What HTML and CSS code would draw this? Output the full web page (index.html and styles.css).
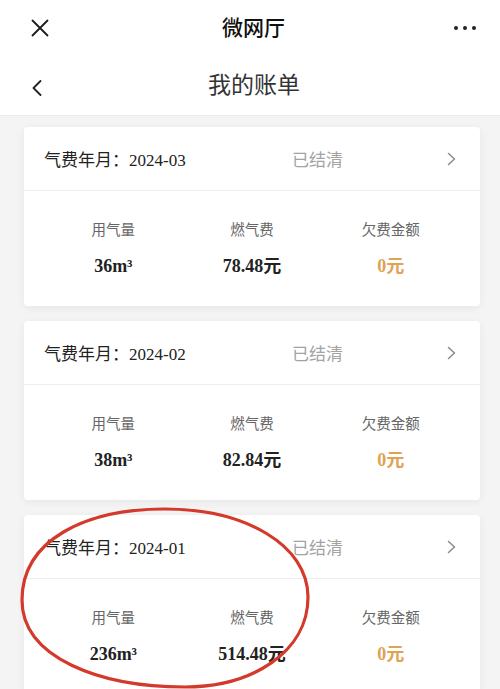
FILE: index.html
```html
<!DOCTYPE html>
<html lang="zh-CN">
<head>
<meta charset="utf-8">
<title>我的账单</title>
<link rel="stylesheet" href="styles.css">
</head>
<body>
<div class="page">
  <header class="topbar">
    <div class="tb-left">
      <svg class="icon-close" width="18" height="18" viewBox="0 0 18 18"><path d="M1.5 1.5 L16.5 16.5 M16.5 1.5 L1.5 16.5" stroke="#1c1c1c" stroke-width="1.8" stroke-linecap="round" fill="none"/></svg>
    </div>
    <div class="tb-title">微网厅</div>
    <div class="tb-right">
      <span class="dot"></span><span class="dot"></span><span class="dot"></span>
    </div>
  </header>
  <div class="navbar">
    <div class="nb-left">
      <svg width="10" height="16" viewBox="0 0 10 16"><path d="M8.5 1 L1.5 8 L8.5 15" stroke="#222" stroke-width="1.8" stroke-linecap="round" stroke-linejoin="round" fill="none"/></svg>
    </div>
    <div class="nb-title">我的账单</div>
    <div class="nb-right"></div>
  </div>

  <main class="list">
    <section class="card">
      <div class="card-head">
        <span class="month">气费年月：2024-03</span>
        <span class="status">已结清</span>
        <svg class="chev" width="9" height="14" viewBox="0 0 9 14"><path d="M1.5 1.5 L7.5 7 L1.5 12.5" stroke="#8a8a8a" stroke-width="1.5" stroke-linecap="round" stroke-linejoin="round" fill="none"/></svg>
      </div>
      <div class="card-body">
        <div class="col"><div class="label">用气量</div><div class="value">36m³</div></div>
        <div class="col"><div class="label">燃气费</div><div class="value">78.48元</div></div>
        <div class="col"><div class="label">欠费金额</div><div class="value owe">0元</div></div>
      </div>
    </section>

    <section class="card">
      <div class="card-head">
        <span class="month">气费年月：2024-02</span>
        <span class="status">已结清</span>
        <svg class="chev" width="9" height="14" viewBox="0 0 9 14"><path d="M1.5 1.5 L7.5 7 L1.5 12.5" stroke="#8a8a8a" stroke-width="1.5" stroke-linecap="round" stroke-linejoin="round" fill="none"/></svg>
      </div>
      <div class="card-body">
        <div class="col"><div class="label">用气量</div><div class="value">38m³</div></div>
        <div class="col"><div class="label">燃气费</div><div class="value">82.84元</div></div>
        <div class="col"><div class="label">欠费金额</div><div class="value owe">0元</div></div>
      </div>
    </section>

    <section class="card">
      <div class="card-head">
        <span class="month">气费年月：2024-01</span>
        <span class="status">已结清</span>
        <svg class="chev" width="9" height="14" viewBox="0 0 9 14"><path d="M1.5 1.5 L7.5 7 L1.5 12.5" stroke="#8a8a8a" stroke-width="1.5" stroke-linecap="round" stroke-linejoin="round" fill="none"/></svg>
      </div>
      <div class="card-body">
        <div class="col"><div class="label">用气量</div><div class="value">236m³</div></div>
        <div class="col"><div class="label">燃气费</div><div class="value">514.48元</div></div>
        <div class="col"><div class="label">欠费金额</div><div class="value owe">0元</div></div>
      </div>
    </section>
  </main>

  <svg class="annotation" width="500" height="689" viewBox="0 0 500 689">
    <path d="M22 600 C22 540 85 509 165 509 C245 509 308 545 308 597 C308 652 252 687 185 687 C100 687 22 658 22 600 Z" fill="none" stroke="#d33a2b" stroke-width="3.2"/>
  </svg>
</div>
</body>
</html>
```

FILE: styles.css
```css
html, body {
  margin: 0;
  padding: 0;
}
body {
  width: 500px;
  height: 689px;
  overflow: hidden;
  background: #f4f4f4;
  font-family: "Liberation Serif", "Noto Sans CJK SC", serif;
  color: #222;
}
.page {
  position: relative;
  width: 500px;
  height: 689px;
  overflow: hidden;
}
.topbar {
  height: 55px;
  background: #fff;
  display: grid;
  grid-template-columns: 1fr auto 1fr;
  align-items: center;
  padding: 0 24px 0 31px;
}
.tb-left {
  display: flex;
  align-items: center;
}
.icon-close {
  display: block;
}
.tb-title {
  font-family: "Noto Sans CJK SC", sans-serif;
  font-size: 21px;
  font-weight: 500;
  color: #111;
  line-height: 1;
  margin-top: -2px;
}
.tb-right {
  display: flex;
  justify-content: flex-end;
  gap: 5px;
}
.dot {
  width: 4px;
  height: 4px;
  border-radius: 50%;
  background: #222;
}
.navbar {
  height: 60px;
  background: #fff;
  display: grid;
  grid-template-columns: 1fr auto 1fr;
  align-items: center;
  padding: 0 24px 0 32px;
  border-bottom: 1px solid #ececec;
}
.nb-left svg {
  display: block;
  margin-top: 5px;
}
.nb-title {
  font-family: "Noto Sans CJK SC", sans-serif;
  font-size: 23px;
  color: #333;
  line-height: 1;
  margin-top: -3px;
}
.list {
  padding: 11px 20px 0 24px;
  display: flex;
  flex-direction: column;
  gap: 15px;
}
.card {
  background: #fff;
  border-radius: 4px;
  box-shadow: 0 2px 8px rgba(0, 0, 0, 0.06);
  height: 179px;
  flex-shrink: 0;
}
.card-head {
  height: 64px;
  display: flex;
  align-items: center;
  padding: 0 24px 0 20px;
  border-bottom: 1px solid #eeeeee;
  box-sizing: border-box;
}
.month {
  flex: 1;
  font-size: 17px;
  color: #222;
}
.status {
  font-family: "Noto Sans CJK SC", sans-serif;
  font-size: 17px;
  color: #a3a3a3;
  margin-right: 104px;
}
.chev {
  display: block;
}
.card-body {
  display: grid;
  grid-template-columns: repeat(3, 1fr);
  padding: 28px 20px 0;
  text-align: center;
}
.label {
  font-family: "Noto Sans CJK SC", sans-serif;
  font-size: 14.5px;
  line-height: 20px;
  color: #666;
}
.value {
  margin-top: 15px;
  font-size: 18px;
  font-weight: bold;
  line-height: 24px;
  color: #222;
}
.value.owe {
  color: #e0a253;
}
.annotation {
  position: absolute;
  left: 0;
  top: 0;
  pointer-events: none;
}
```
